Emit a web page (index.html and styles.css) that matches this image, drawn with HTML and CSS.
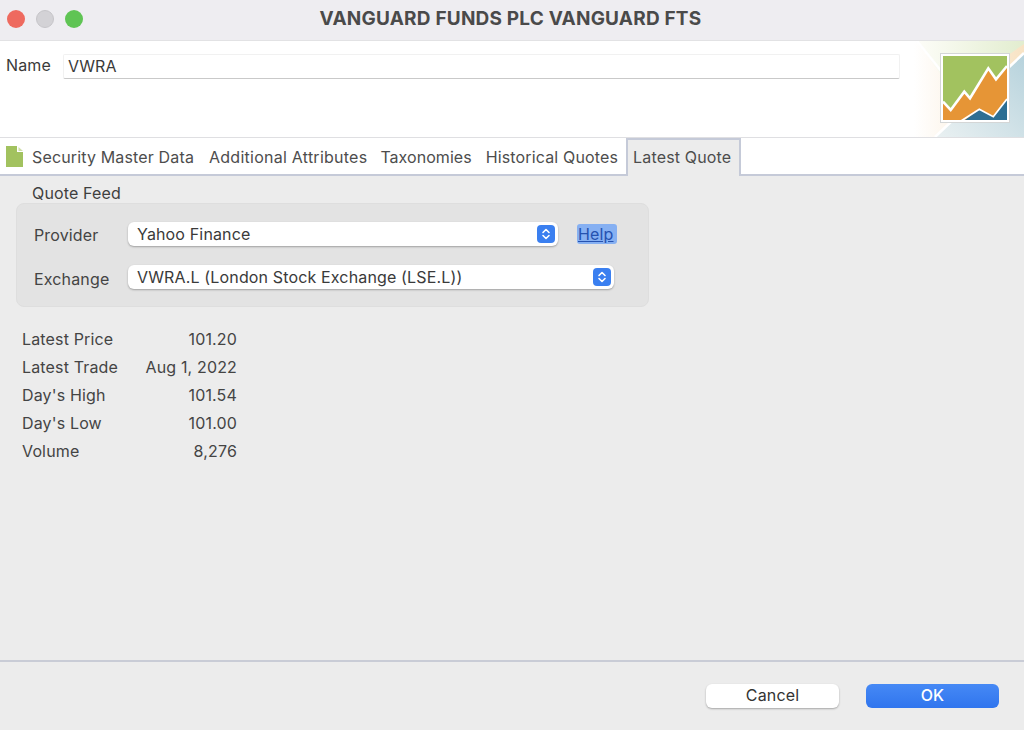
FILE: index.html
```html
<!DOCTYPE html>
<html lang="en">
<head>
<meta charset="utf-8">
<title>VANGUARD FUNDS PLC VANGUARD FTS</title>
<link rel="stylesheet" href="styles.css">
</head>
<body>
<div class="window">
  <header class="titlebar">
    <div class="lights"><span class="light red"></span><span class="light grey"></span><span class="light green"></span></div>
    <h1 class="title">VANGUARD FUNDS PLC VANGUARD FTS</h1>
  </header>
  <section class="head">
    <label class="name-label">Name</label>
    <div class="name-input">VWRA</div>
    <svg class="banner" viewBox="0 0 110 96" width="110" height="96" aria-hidden="true">
      <defs>
        <linearGradient id="fadeOrange" x1="0" x2="1" y1="0" y2="0"><stop offset="0" stop-color="#fff"/><stop offset="1" stop-color="#f8e3c4"/></linearGradient>
        <linearGradient id="fadeGreen" x1="0" x2="1" y1="0" y2="0"><stop offset="0" stop-color="#fdfdf8"/><stop offset="1" stop-color="#e2edcf"/></linearGradient>
        <linearGradient id="fadeBlue" x1="0" x2="1" y1="1" y2="0"><stop offset="0" stop-color="#eaf1f2"/><stop offset="1" stop-color="#b6d2dc"/></linearGradient>
      </defs>
      <rect width="110" height="96" fill="#fff"/>
      <path d="M0 0H110V12L21 96H0Z" fill="url(#fadeOrange)"/>
      <path d="M3 0H110V3L40 52Z" fill="url(#fadeGreen)"/>
      <path d="M21 96L110 12V96Z" fill="url(#fadeBlue)"/>
      <path d="M3 0L40 46" stroke="#fff" stroke-width="2.500" fill="none"/>
      <path d="M21 96L110 12" stroke="#fff" stroke-width="2.500" fill="none"/>
      <rect x="26.500" y="12.500" width="69" height="69" fill="#fff" stroke="#d4d6d6"/>
      <rect x="29" y="15" width="64" height="64" fill="#a2c25f"/>
      <path d="M29 60.700L36.700 69L50.300 50.700L56 57.300L74.300 27.300L82 38.300L93 25V79H29Z" fill="#e69536"/>
      <path d="M51 79L65.300 68.300L79.300 75.700L93 58V79Z" fill="#2d6e93"/>
      <path d="M29 60.700L36.700 69L50.300 50.700L56 57.300L74.300 27.300L82 38.300L93 25" stroke="#fff" stroke-width="2.600" fill="none"/>
      <path d="M47 80L65.300 68.300L79.300 75.700L93 58" stroke="#fff" stroke-width="1.800" fill="none"/>
    </svg>
  </section>
  <nav class="tabs">
    <svg class="doc" viewBox="0 0 17 21" width="17" height="21" aria-hidden="true"><path d="M0 0H11V6H17V21H0Z" fill="#a2c25f"/><path d="M12.500 1L17 5H12.500Z" fill="#cfdfa8"/></svg>
    <span class="tab">Security Master Data</span>
    <span class="tab wide">Additional Attributes</span>
    <span class="tab tight">Taxonomies</span>
    <span class="tab">Historical Quotes</span>
    <span class="tab active">Latest Quote</span>
  </nav>
  <main class="content">
    <div class="group-title">Quote Feed</div>
    <section class="group">
      <div class="row">
        <span class="row-label">Provider</span>
        <div class="select provider">Yahoo Finance
          <span class="stepper"><svg viewBox="0 0 10 14" width="10" height="14"><path d="M2 5.500L5 2.500L8 5.500M2 8.500L5 11.500L8 8.500" stroke="#fff" stroke-width="1.600" fill="none" stroke-linecap="round" stroke-linejoin="round"/></svg></span>
        </div>
        <a class="help">Help</a>
      </div>
      <div class="row">
        <span class="row-label low">Exchange</span>
        <div class="select exchange">VWRA.L (London Stock Exchange (LSE.L))
          <span class="stepper"><svg viewBox="0 0 10 14" width="10" height="14"><path d="M2 5.500L5 2.500L8 5.500M2 8.500L5 11.500L8 8.500" stroke="#fff" stroke-width="1.600" fill="none" stroke-linecap="round" stroke-linejoin="round"/></svg></span>
        </div>
      </div>
    </section>
    <dl class="stats">
      <dt>Latest Price</dt><dd>101.20</dd>
      <dt>Latest Trade</dt><dd>Aug 1, 2022</dd>
      <dt>Day's High</dt><dd>101.54</dd>
      <dt>Day's Low</dt><dd>101.00</dd>
      <dt>Volume</dt><dd>8,276</dd>
    </dl>
  </main>
  <footer class="footer">
    <button class="btn cancel">Cancel</button>
    <button class="btn ok">OK</button>
  </footer>
</div>
</body>
</html>
```
FILE: styles.css
```css
* { box-sizing: border-box; }
html, body { margin: 0; padding: 0; }
body {
  width: 1024px;
  height: 730px;
  overflow: hidden;
  background: #ececec;
  font-family: Inter, "Noto Sans", sans-serif;
  font-size: 16px;
  letter-spacing: .15px;
  color: #3f3f3f;
}
.window { display: flex; flex-direction: column; height: 730px; }

.titlebar {
  height: 41px;
  flex: none;
  display: flex;
  align-items: center;
  justify-content: center;
  padding-right: 3px;
  background: #eeedf1;
  border-bottom: 1px solid #e2e2e4;
  position: relative;
}
.lights { position: absolute; left: 7px; top: 10px; display: flex; gap: 11px; }
.light { width: 18px; height: 18px; border-radius: 50%; }
.red { background: #ee6a5f; }
.grey { background: #d3d2d6; border: 1px solid #c6c5c9; }
.green { background: #5fc454; }
.title { margin: -3px 0 0; font-size: 19px; font-weight: 700; color: #4a4a4a; letter-spacing: .2px; }

.head {
  height: 97px;
  flex: none;
  background: #fff;
  position: relative;
  display: flex;
  align-items: flex-start;
  padding: 13px 0 0 6px;
  border-bottom: 1px solid #dfdfe2;
}
.name-label { width: 57px; color: #3a3a3a; line-height: 22px; }
.name-input {
  width: 837px;
  height: 25px;
  padding-left: 4px;
  line-height: 22px;
  color: #3a3a3a;
  background: #fff;
  border: 1px solid #f1f1f1;
  border-bottom: 1px solid #c9c9c9;
  border-radius: 2px;
}
.banner { position: absolute; right: 0; top: 0; }

.tabs {
  height: 38px;
  flex: none;
  display: flex;
  align-items: center;
  background: #fff;
  border-bottom: 2px solid #c5cad8;
  padding-left: 6px;
  position: relative;
}
.doc { flex: none; margin-right: 9px; }
.tab { color: #4d4d4d; margin: 2px 15px 0 0; white-space: nowrap; line-height: 36px; }
.tab.wide { margin-right: 13px; letter-spacing: .25px; }
.tab.tight { margin-right: 14px; letter-spacing: .05px; }
.tab.active {
  margin: 0 0 -2px -7px;
  height: 38px;
  padding: 0 8px 0 5px;
  line-height: 34px;
  background: #ececec;
  border: 2px solid #c5cad8;
  border-bottom: 0;
}

.content { flex: 1; padding: 8px 0 0 16px; border-bottom: 2px solid #c9ccd6; }
.group-title { margin-left: 16px; line-height: 18px; height: 19px; color: #3f3f3f; }
.group {
  width: 633px;
  height: 104px;
  background: #e3e3e3;
  border: 1px solid #dedede;
  border-radius: 8px;
  padding: 17px 0 0 17px;
  display: flex;
  flex-direction: column;
  gap: 18px;
}
.row { display: flex; align-items: center; height: 25px; }
.row-label { width: 94px; margin-top: 3px; color: #444; }
.row-label.low { margin-top: 5px; }
.select {
  position: relative;
  height: 24px;
  line-height: 24px;
  padding-left: 9px;
  background: #fff;
  border-radius: 6px;
  box-shadow: 0 1px 2px rgba(0,0,0,.3);
  color: #3a3a3a;
}
.provider { width: 430px; }
.exchange { width: 486px; }
.stepper {
  position: absolute;
  right: 3px;
  top: 3px;
  width: 18px;
  height: 18px;
  border-radius: 4px;
  background: #3a7ff0;
  display: flex;
  align-items: center;
  justify-content: center;
}
.help {
  margin-left: 19px;
  padding: 0 1px;
  width: 40px;
  height: 20px;
  line-height: 20px;
  background: #86b0f2;
  color: #2552b0;
  text-decoration: underline;
  border-radius: 3px;
}

.stats {
  margin: 18px 0 0 6px;
  width: 215px;
  display: grid;
  grid-template-columns: auto 1fr;
  grid-auto-rows: 28px;
  line-height: 28px;
  color: #444;
}
.stats dt, .stats dd { margin: 0; }
.stats dd { text-align: right; }

.footer {
  height: 68px;
  flex: none;
  display: flex;
  justify-content: flex-end;
  gap: 27px;
  padding: 22px 25px 0 0;
}
.btn {
  width: 133px;
  height: 24px;
  border: 0;
  border-radius: 6px;
  font: inherit;
  letter-spacing: inherit;
  line-height: 20px;
  padding: 0 0 2px;
}
.cancel { background: #fff; color: #333; box-shadow: 0 1px 2px rgba(0,0,0,.3); }
.ok { background: linear-gradient(#4689f5, #3075ee); color: #fff; font-weight: 500; }
```
